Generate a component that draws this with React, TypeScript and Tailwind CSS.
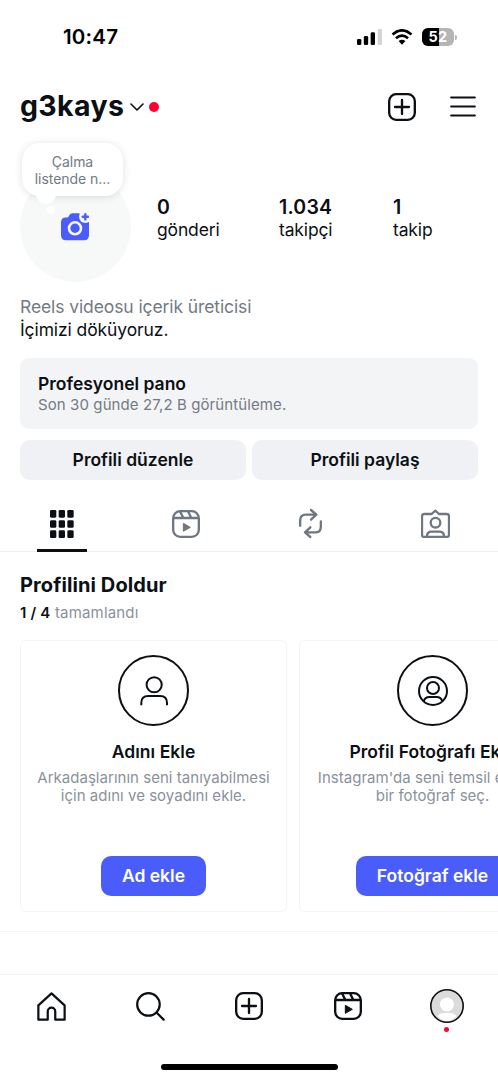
import type { ReactNode } from "react";

type IconProps = { className?: string };

const PlusSquareIcon = ({ className }: IconProps) => (
  <svg viewBox="0 0 84 84" className={className} fill="none" stroke="currentColor" strokeWidth="7" strokeLinecap="round">
    <rect x="3.5" y="3.5" width="77" height="77" rx="21" />
    <path d="M42 21v42M21 42h42" />
  </svg>
);

const ReelsIcon = ({ className }: IconProps) => (
  <svg viewBox="0 0 84 84" className={className} fill="none" stroke="currentColor" strokeWidth="7">
    <rect x="3.5" y="3.5" width="77" height="77" rx="21" />
    <path d="M4 24h76M24 4l10 20M48 4l10 20" />
    <path d="M34 40v24l21-12z" fill="currentColor" strokeWidth="3" strokeLinejoin="round" />
  </svg>
);

const GridIcon = ({ className }: IconProps) => (
  <svg viewBox="0 0 72 84" className={className} fill="currentColor">
    {[0, 30.5, 61].map((y) =>
      [0, 26, 52].map((x) => <rect key={`${x}-${y}`} x={x} y={y} width="19" height="23" rx="4" />)
    )}
  </svg>
);

const RepostIcon = ({ className }: IconProps) => (
  <svg viewBox="147 220 75 93" className={className} fill="none" stroke="currentColor" strokeWidth="7" strokeLinecap="round" strokeLinejoin="round">
    <path d="M153.500 273v-16q0-17 17-17H202M186 226l16 14-16 15" />
    <path d="M215.500 260v16q0 17-17 17H168M184 278l-16 15 16 14" />
  </svg>
);

const TaggedIcon = ({ className }: IconProps) => (
  <svg viewBox="516 222 87 87" className={className} fill="none" stroke="currentColor" strokeWidth="7" strokeLinejoin="round">
    <path d="M526 237h22l11-10 11 10h23q7 0 7 7v55q0 7-7 7h-67q-7 0-7-7v-55q0-7 7-7z" />
    <circle cx="559.500" cy="263" r="14.500" />
    <path d="M534 306v-2q0-14 14-14h23q14 0 14 14v2" />
  </svg>
);

const HomeIcon = ({ className }: IconProps) => (
  <svg viewBox="0 0 85 85" className={className} fill="none" stroke="currentColor" strokeWidth="6.500" strokeLinejoin="round">
    <path d="M4 81V39L42.500 4 81 39v42H53.500V57a11 11 0 0 0-22 0v24z" />
  </svg>
);

const SearchIcon = ({ className }: IconProps) => (
  <svg viewBox="0 0 85 85" className={className} fill="none" stroke="currentColor" strokeWidth="6.500" strokeLinecap="round">
    <circle cx="36.500" cy="36.500" r="33" />
    <path d="M60 60l21 21" />
  </svg>
);

const CameraIcon = ({ className }: IconProps) => (
  <svg viewBox="0 0 29 28" className={className}>
    <path d="M5 4.500h1Q7.200 4.500 7.800 3.300L8.600 1.800Q9.500 0.300 11.300 0.300H18l10 9v13q0 5-5 5H5q-5 0-5-5v-13q0-4.800 5-4.800z" fill="#4a5dfb" />
    <circle cx="24.300" cy="3.800" r="6.200" fill="#f7f9f9" />
    <path d="M24.300 1.200v5.200M21.700 3.800h5.200" stroke="#4a5dfb" strokeWidth="2.400" strokeLinecap="round" />
    <circle cx="14" cy="15.300" r="6" fill="none" stroke="#f7f9f9" strokeWidth="2.600" />
  </svg>
);

const StatusBar = () => (
  <div className="flex h-[74px] shrink-0 items-center pr-[41px] pl-[63px]">
    <span className="text-[20.500px] font-semibold tracking-[0.2px] text-black">10:47</span>
    <div className="ml-auto flex items-center">
      <svg viewBox="0 0 75 48" className="mr-[9px] h-4 w-[25px]">
        <rect x="0" y="30" width="13" height="18" rx="4" />
        <rect x="20.500" y="21" width="13" height="27" rx="4" />
        <rect x="41" y="10" width="13" height="38" rx="4" />
        <rect x="62" y="0" width="13" height="48" rx="4" fill="#d4d4d4" />
      </svg>
      <svg viewBox="153 56 65 49" className="mr-[9px] h-4 w-[22px]" fill="none" stroke="black" strokeWidth="8">
        <path d="M156.500 73q29-26 58 0M167 84q18.500-16 37 0" />
        <path d="M175 93q10.500-8 21 0l-10.500 11z" fill="black" stroke="none" />
      </svg>
      <div className="relative flex h-[18px] w-8 items-center justify-center overflow-hidden rounded-[6px] bg-[#b5b5b5]">
        <div className="absolute inset-y-0 left-0 w-[17px] bg-black" />
        <span className="relative text-[14.500px] leading-none font-bold tracking-[0.3px] text-white">52</span>
      </div>
      <div className="ml-px h-[5px] w-[2px] rounded-r-full bg-[#b5b5b5]" />
    </div>
  </div>
);

const stats = [
  { value: "0", label: "gönderi", className: "w-[122px]" },
  { value: "1.034", label: "takipçi", className: "w-[114px]" },
  { value: "1", label: "takip", className: "w-[60px]" },
];

const ProfileSummary = () => (
  <div className="flex h-[144px] shrink-0 pl-5">
    <div className="relative w-[111px]">
      <div className="mt-[31px] flex size-[111px] items-center justify-center rounded-full bg-[#f7f9f9]">
        <CameraIcon className="h-[28px] w-[29px]" />
      </div>
      {/* Note bubble */}
      <div className="absolute top-[3px] left-[2px] h-[53px] w-[101px] rounded-[18px] bg-white pt-[10px] text-center text-[14px] leading-[17px] text-[#737a85] shadow-[0_1px_8px_rgba(0,0,0,0.12)]">
        <div className="absolute top-[41px] left-[14px] size-[20px] rounded-full bg-white" />
        <div className="relative tracking-[-0.05px]">
          Çalma
          <br />
          listende n...
        </div>
        <div className="absolute top-[63px] left-[25px] size-[8px] rounded-full bg-white" />
      </div>
    </div>
    <div className="flex pt-[55px] pl-[26px]">
      {stats.map((item) => (
        <div key={item.label} className={item.className}>
          <div className="text-[19.500px] leading-[24px] font-semibold tracking-[0.2px]">{item.value}</div>
          <div className="text-[17.500px] leading-[22px] tracking-[-0.15px]">{item.label}</div>
        </div>
      ))}
    </div>
  </div>
);

const tabs = [
  { name: "grid", icon: <GridIcon className="h-[28px] w-[24px]" />, className: "" },
  { name: "reels", icon: <ReelsIcon className="size-[28px]" />, className: "pr-[2px] text-[#6f7782]" },
  { name: "reposts", icon: <RepostIcon className="h-[31px] w-[25px]" />, className: "pr-[2px] text-[#6f7782]" },
  { name: "tagged", icon: <TaggedIcon className="size-[29px]" />, className: "text-[#6f7782]" },
];

const ProfileTabs = () => (
  <div className="mt-[16px] grid h-[56px] shrink-0 grid-cols-4 border-b border-[#ececee]">
    {tabs.map((tab, i) => (
      <div key={tab.name} className={`relative flex items-center justify-center ${tab.className}`}>
        {tab.icon}
        {i === 0 && <div className="absolute bottom-[-1px] left-[37px] h-[3px] w-[50px] bg-[#0c1014]" />}
      </div>
    ))}
  </div>
);

type TaskCardProps = {
  icon: ReactNode;
  title: string;
  lines: string[];
  action: string;
};

const TaskCard = ({ icon, title, lines, action }: TaskCardProps) => (
  <div className="flex h-[272px] w-[267px] shrink-0 flex-col items-center rounded-[6px] border border-[#f3f4f5] pt-[14px]">
    <div className="flex size-[71px] items-center justify-center rounded-full border-2 border-[#0c1014]">{icon}</div>
    <div className="mt-[14px] text-[17.500px] leading-[23px] font-semibold tracking-[0.05px] whitespace-nowrap">{title}</div>
    <div className="mt-[6px] text-center text-[15px] leading-[18px] tracking-[0.03px] whitespace-nowrap text-[#8b919b]">
      {lines.map((line) => (
        <div key={line}>{line}</div>
      ))}
    </div>
    <button className="mt-auto mb-[15px] h-[40px] rounded-[10px] bg-[#4a5dfb] px-[20.500px] text-[17.500px] font-semibold whitespace-nowrap text-white">
      {action}
    </button>
  </div>
);

const BottomNav = () => (
  <nav className="flex h-[106px] shrink-0 flex-col items-center border-t border-[#f1f2f3]">
    <div className="flex h-[62px] w-full items-center pr-[34px] pl-[37px]">
      <HomeIcon className="size-[29px]" />
      <SearchIcon className="ml-[70px] size-[29px]" />
      <PlusSquareIcon className="ml-[70px] size-[28px]" />
      <ReelsIcon className="ml-[71px] size-[28px]" />
      <div className="relative ml-auto">
        <svg viewBox="0 0 34 34" className="size-[34px]">
          <circle cx="17" cy="17" r="16.200" fill="#dbdbdb" stroke="#0c1014" strokeWidth="1.600" />
          <circle cx="17" cy="15.500" r="7" fill="white" />
          <path d="M7.500 27Q10 24 14 24h6q4 0 6.500 3Q22 32 17 32t-9.500-5z" fill="white" />
        </svg>
        <div className="absolute top-[38px] left-[14px] size-[5px] rounded-full bg-[#ff0033]" />
      </div>
    </div>
    <div className="mt-[27px] h-[6px] w-[177px] rounded-full bg-black" />
  </nav>
);

const App = () => {
  return (
    <div className="flex h-[1080px] w-[498px] flex-col overflow-hidden bg-white font-['Inter',sans-serif] text-[#0c1014]">
      <StatusBar />

      {/* Header */}
      <header className="flex h-[66px] shrink-0 items-center pr-[22px] pb-px pl-5">
        <h1 className="text-[28.500px] font-bold tracking-[0.35px]">g3kays</h1>
        <svg viewBox="0 0 14 8" className="ml-[6px] h-[8px] w-[14px]" fill="none" stroke="currentColor" strokeWidth="1.600" strokeLinecap="round" strokeLinejoin="round">
          <path d="M1 1l6 6 6-6" />
        </svg>
        <div className="ml-[5px] size-[10px] rounded-full bg-[#ff0033]" />
        <PlusSquareIcon className="ml-auto size-[28px]" />
        <svg viewBox="0 0 26 21" className="ml-[34px] h-[21px] w-[26px]" stroke="currentColor" strokeWidth="2.200" strokeLinecap="round">
          <path d="M1.200 1.500h23.600M1.200 10.500h23.600M1.200 19.500h23.600" />
        </svg>
      </header>

      <ProfileSummary />

      {/* Bio */}
      <div className="mt-[11px] px-5 text-[17.500px] leading-[23px] tracking-[-0.1px]">
        <p className="text-[#737a85]">Reels videosu içerik üreticisi</p>
        <p>İçimizi döküyoruz.</p>
      </div>

      <div className="mx-5 mt-[17px] h-[71px] shrink-0 rounded-[9px] bg-[#f3f4f6] pt-[15px] pl-[18px]">
        <div className="text-[17.500px] leading-[22px] font-semibold">Profesyonel pano</div>
        <div className="text-[15px] leading-[20px] tracking-[0.1px] text-[#737a85]">Son 30 günde 27,2 B görüntüleme.</div>
      </div>

      <div className="mx-5 mt-[11px] grid h-[40px] shrink-0 grid-cols-2 gap-[6px] text-[17.500px] font-semibold">
        <button className="rounded-[10px] bg-[#f0f1f5]">Profili düzenle</button>
        <button className="rounded-[10px] bg-[#f0f1f5]">Profili paylaş</button>
      </div>

      <ProfileTabs />

      {/* Profile completion */}
      <section className="h-[380px] shrink-0 border-b border-[#f3f4f5] pt-[20px] pl-5">
        <h2 className="text-[20px] leading-[26px] font-bold tracking-[0.1px]">Profilini Doldur</h2>
        <p className="mt-[5px] text-[15px] leading-[20px] tracking-[0.18px] text-[#8b919b]">
          <span className="font-semibold text-[#0c1014]">1 / 4</span> tamamlandı
        </p>
        <div className="mt-[17px] flex gap-3 overflow-hidden">
          <TaskCard
            icon={
              <svg viewBox="417 122 85 90" className="h-[30px] w-[28px]" fill="none" stroke="currentColor" strokeWidth="6">
                <circle cx="460" cy="148" r="23" />
                <path d="M421 210v-7q0-21 21-21h36q21 0 21 21v7" />
              </svg>
            }
            title="Adını Ekle"
            lines={["Arkadaşlarının seni tanıyabilmesi", "için adını ve soyadını ekle."]}
            action="Ad ekle"
          />
          <TaskCard
            icon={
              <svg viewBox="411 122 90 90" className="size-[30px]" fill="none" stroke="currentColor" strokeWidth="6">
                <circle cx="456" cy="167" r="42" />
                <circle cx="456" cy="158" r="18" />
                <path d="M428 198q4-13 17-13h22q13 0 17 13" />
              </svg>
            }
            title="Profil Fotoğrafı Ekle"
            lines={["Instagram'da seni temsil edecek", "bir fotoğraf seç."]}
            action="Fotoğraf ekle"
          />
        </div>
      </section>

      <div className="grow" />
      <BottomNav />
    </div>
  );
};

export default App;
